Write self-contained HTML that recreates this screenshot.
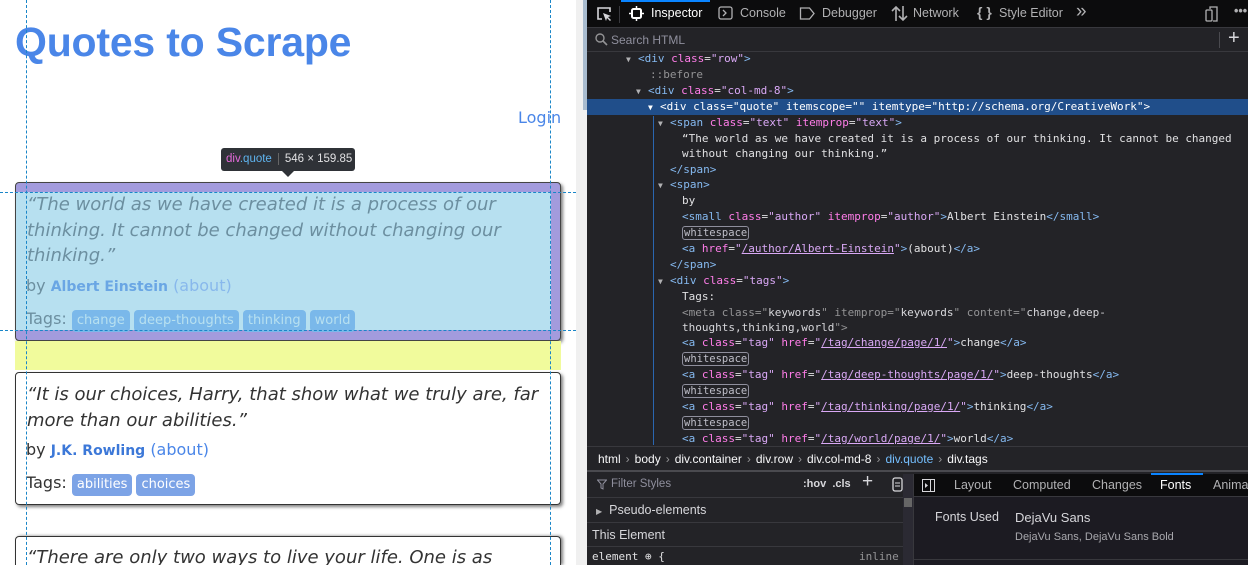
<!DOCTYPE html>
<html style="width:1248px;height:565px;overflow:hidden"><head><meta charset="utf-8"><style>
*{margin:0;padding:0;box-sizing:border-box}
body{width:1248px;height:565px;overflow:hidden;position:relative;background:#fff;font-family:"DejaVu Sans","Liberation Sans",sans-serif}
.a{position:absolute;white-space:nowrap}
.q{font-style:italic;font-size:18px;line-height:25.5px}
.tag{display:inline-block;font-size:13px;padding:2px 5px;border-radius:4px;color:#fff;background:#7ca3e6;margin-right:4px;line-height:18px;font-style:normal}
.dt{font-family:"Liberation Sans","DejaVu Sans",sans-serif;font-size:12.5px;color:#d7d7db}
.m{font-family:"DejaVu Sans Mono","Liberation Mono",monospace;font-size:11px;color:#e0e0e2;line-height:16px}
.t{color:#85b9f0}.n{color:#ff7de9}.v{color:#d9a8f5}.u{text-decoration:underline;color:#d9a8f5}
.ws{border:1px solid #8f8f9d;border-radius:3px;padding:0 1px;color:#bfbfc9;font-size:10.5px}
.tri{color:#b1b1b3;font-size:8px;display:inline-block;width:12px;text-align:left}
.sep{color:#939395;margin:0 5px}
</style></head><body>
<div class="a" style="left:15px;top:19px;font-family:'Liberation Sans',sans-serif;font-weight:bold;font-size:41px;color:#4a86e8;letter-spacing:-0.2px">Quotes to Scrape</div>
<div class="a" style="left:518px;top:108px;font-size:16px;color:#4a86e8">Login</div>

<div class="a" style="left:15px;top:182px;width:546px;height:159px;background:#a39bdd;border:1px solid #444;border-radius:4px;box-shadow:2px 2px 3px rgba(0,0,0,.5)"></div>
<div class="a" style="left:16px;top:192px;width:535px;height:138px;background:#b7e0f0"></div>
<div class="a" style="left:15px;top:341px;width:546px;height:29px;background:#f1fb9c"></div>
<div class="a q" style="left:27px;top:192px;color:#6c8fa0">“The world as we have created it is a process of our<br>thinking. It cannot be changed without changing our<br>thinking.”</div>
<div class="a" style="left:26px;top:276px;font-size:16px;color:#6c8fa0">by <b style="font-size:14px;color:#6aa6e4">Albert Einstein</b> <span style="color:#88b8ec">(about)</span></div>
<div class="a" style="left:26px;top:309px;font-size:16px;color:#6c8fa0">Tags: <span class="tag" style="background:#7ab8ea;color:#b7e0f0">change</span><span class="tag" style="background:#7ab8ea;color:#b7e0f0">deep-thoughts</span><span class="tag" style="background:#7ab8ea;color:#b7e0f0">thinking</span><span class="tag" style="background:#7ab8ea;color:#b7e0f0">world</span></div>

<div class="a" style="left:15px;top:372px;width:546px;height:133px;border:1px solid #333;border-radius:4px;box-shadow:2px 2px 3px rgba(0,0,0,.5)"></div>
<div class="a q" style="left:27px;top:382px;color:#333">“It is our choices, Harry, that show what we truly are, far<br>more than our abilities.”</div>
<div class="a" style="left:26px;top:440px;font-size:16px;color:#333">by <b style="font-size:14px;color:#3c78d8">J.K. Rowling</b> <span style="color:#4a86e8">(about)</span></div>
<div class="a" style="left:26px;top:473px;font-size:16px;color:#333">Tags: <span class="tag">abilities</span><span class="tag">choices</span></div>
<div class="a" style="left:15px;top:536px;width:546px;height:29px;border:1px solid #333;border-bottom:0;border-radius:4px 4px 0 0;box-shadow:2px 0 3px rgba(0,0,0,.5);overflow:hidden">
<div class="q" style="position:absolute;left:11px;top:8px;color:#333;white-space:nowrap">“There are only two ways to live your life. One is as</div></div>

<div class="a" style="left:26px;top:0;height:565px;border-left:1px dashed #1a86c8"></div>
<div class="a" style="left:550px;top:0;height:565px;border-left:1px dashed #1a86c8"></div>
<div class="a" style="left:0;top:192px;width:576px;border-top:1px dashed #1a86c8"></div>
<div class="a" style="left:0;top:330px;width:576px;border-top:1px dashed #1a86c8"></div>

<div class="a" style="left:221px;top:148px;width:134px;height:23px;background:#2f3237;border-radius:3px;font-family:'Liberation Sans',sans-serif;font-size:11.5px;line-height:23px;padding-left:5px;color:#e0e0e2"><span style="color:#e36ad9">div</span><span style="color:#5fb4ef">.quote</span><span style="border-left:1px solid #666;margin:0 6px 0 6px"></span>546 × 159.85</div>
<div class="a" style="left:282px;top:171px;border:6px solid transparent;border-top-color:#2f3237;border-bottom:0"></div>

<div class="a" style="left:576px;top:0;width:11px;height:565px;background:#f0f0f0"></div>
<div class="a" style="left:583px;top:0;width:4px;height:110px;background:#a9bccf"></div>

<div class="a" style="left:587px;top:0;width:661px;height:565px;background:#232327"></div>
<div class="a" style="left:587px;top:0;width:661px;height:28px;background:#0c0c0d;border-bottom:1px solid #38383d"></div>
<div class="a" style="left:621px;top:0;width:89px;height:2px;background:#0a84ff"></div>
<svg class="a" style="left:595px;top:5px" width="18" height="18" viewBox="0 0 18 18"><path d="M7 14H3V3h12v4" fill="none" stroke="#d7d7db" stroke-width="1.6"/><path d="M8 8l8 3-3 1 3 3-1 1-3-3-1 3z" fill="#d7d7db"/></svg>
<div class="a" style="left:619px;top:6px;width:1px;height:17px;background:#38383d"></div>
<svg class="a" style="left:629px;top:6px" width="15" height="15"><rect x="3" y="3" width="9" height="9" rx="1.5" fill="none" stroke="#fff" stroke-width="2"/><path d="M7.5 0v3M7.5 12v3M0 7.5h3M12 7.5h3" stroke="#fff" stroke-width="1.5"/></svg>
<div class="a dt" style="left:651px;top:6px;color:#fff">Inspector</div>
<svg class="a" style="left:718px;top:6px" width="15" height="15"><rect x="1" y="1" width="13" height="12" rx="2" fill="none" stroke="#b1b1b3" stroke-width="1.3"/><path d="M5 4l3 3-3 3" fill="none" stroke="#b1b1b3" stroke-width="1.3"/></svg>
<div class="a dt" style="left:740px;top:6px;color:#b1b1b3">Console</div>
<svg class="a" style="left:799px;top:6px" width="17" height="15"><path d="M1.5 2h9l4.5 5.5-4.5 5.5h-9z" fill="none" stroke="#b1b1b3" stroke-width="1.3"/></svg>
<div class="a dt" style="left:822px;top:6px;color:#b1b1b3">Debugger</div>
<svg class="a" style="left:891px;top:5px" width="17" height="17"><path d="M5 16V2M1 6l4-4 4 4M12 1v14M8 11l4 4 4-4" fill="none" stroke="#b1b1b3" stroke-width="1.6"/></svg>
<div class="a dt" style="left:913px;top:6px;color:#b1b1b3">Network</div>
<div class="a dt" style="left:977px;top:4px;color:#b1b1b3;font-weight:bold;font-size:14px">{ }</div>
<div class="a dt" style="left:999px;top:6px;color:#b1b1b3">Style Editor</div>
<div class="a dt" style="left:1076px;top:1px;color:#b1b1b3;font-size:19px">»</div>
<svg class="a" style="left:1205px;top:5px" width="18" height="18"><rect x="1" y="5" width="6" height="11" rx="1" fill="none" stroke="#b1b1b3" stroke-width="1.3"/><path d="M5 4V2h7v14H8" fill="none" stroke="#b1b1b3" stroke-width="1.3"/></svg>
<div class="a dt" style="left:1234px;top:4px;color:#b1b1b3;font-weight:bold">•••</div>

<div class="a" style="left:587px;top:51px;width:661px;height:1px;background:#38383d"></div>
<svg class="a" style="left:595px;top:33px" width="13" height="13"><circle cx="5" cy="5" r="4" fill="none" stroke="#939395" stroke-width="1.4"/><path d="M8 8l4 4" stroke="#939395" stroke-width="1.6"/></svg>
<div class="a dt" style="left:611px;top:33px;color:#8f8f9d;font-size:12px">Search HTML</div>
<div class="a" style="left:1219px;top:32px;width:1px;height:16px;background:#4a4a4f"></div>
<div class="a dt" style="left:1228px;top:27px;font-size:20px;color:#d7d7db">+</div>

<div class="a" style="left:587px;top:99px;width:661px;height:16px;background:#204e8a"></div>
<div class="a" style="left:653px;top:116px;width:1px;height:329px;background:#2a66b0"></div>
<div class="a m" style="left:626px;top:51px"><span class="tri">▼</span><span class="t">&lt;div</span> <span class="n">class</span>=<span class="v">"row"</span><span class="t">&gt;</span></div>
<div class="a m" style="left:650px;top:67px;color:#939395">::before</div>
<div class="a m" style="left:636px;top:83px"><span class="tri">▼</span><span class="t">&lt;div</span> <span class="n">class</span>=<span class="v">"col-md-8"</span><span class="t">&gt;</span></div>
<div class="a m" style="left:648px;top:99px;color:#fff"><span class="tri" style="color:#fff">▼</span>&lt;div class="quote" itemscope="" itemtype="http://schema.org/CreativeWork"&gt;</div>
<div class="a m" style="left:658px;top:115px"><span class="tri">▼</span><span class="t">&lt;span</span> <span class="n">class</span>=<span class="v">"text"</span> <span class="n">itemprop</span>=<span class="v">"text"</span><span class="t">&gt;</span></div>
<div class="a m" style="left:682px;top:131px">“The world as we have created it is a process of our thinking. It cannot be changed</div>
<div class="a m" style="left:682px;top:146px">without changing our thinking.”</div>
<div class="a m" style="left:670px;top:162px"><span class="t">&lt;/span&gt;</span></div>
<div class="a m" style="left:658px;top:177px"><span class="tri">▼</span><span class="t">&lt;span&gt;</span></div>
<div class="a m" style="left:682px;top:193px">by</div>
<div class="a m" style="left:682px;top:209px"><span class="t">&lt;small</span> <span class="n">class</span>=<span class="v">"author"</span> <span class="n">itemprop</span>=<span class="v">"author"</span><span class="t">&gt;</span>Albert Einstein<span class="t">&lt;/small&gt;</span></div>
<div class="a m" style="left:682px;top:225px"><span class="ws">whitespace</span></div>
<div class="a m" style="left:682px;top:241px"><span class="t">&lt;a</span> <span class="n">href</span>=<span class="v">"</span><span class="u">/author/Albert-Einstein</span><span class="v">"</span><span class="t">&gt;</span>(about)<span class="t">&lt;/a&gt;</span></div>
<div class="a m" style="left:670px;top:257px"><span class="t">&lt;/span&gt;</span></div>
<div class="a m" style="left:658px;top:273px"><span class="tri">▼</span><span class="t">&lt;div</span> <span class="n">class</span>=<span class="v">"tags"</span><span class="t">&gt;</span></div>
<div class="a m" style="left:682px;top:289px">Tags:</div>
<div class="a m" style="left:682px;top:305px;color:#939395">&lt;meta class="<span style="color:#d7d7db">keywords</span>" itemprop="<span style="color:#d7d7db">keywords</span>" content="<span style="color:#d7d7db">change,deep-</span></div>
<div class="a m" style="left:682px;top:320px;color:#939395"><span style="color:#d7d7db">thoughts,thinking,world</span>"&gt;</div>
<div class="a m" style="left:682px;top:335px"><span class="t">&lt;a</span> <span class="n">class</span>=<span class="v">"tag"</span> <span class="n">href</span>=<span class="v">"</span><span class="u">/tag/change/page/1/</span><span class="v">"</span><span class="t">&gt;</span>change<span class="t">&lt;/a&gt;</span></div>
<div class="a m" style="left:682px;top:351px"><span class="ws">whitespace</span></div>
<div class="a m" style="left:682px;top:367px"><span class="t">&lt;a</span> <span class="n">class</span>=<span class="v">"tag"</span> <span class="n">href</span>=<span class="v">"</span><span class="u">/tag/deep-thoughts/page/1/</span><span class="v">"</span><span class="t">&gt;</span>deep-thoughts<span class="t">&lt;/a&gt;</span></div>
<div class="a m" style="left:682px;top:383px"><span class="ws">whitespace</span></div>
<div class="a m" style="left:682px;top:399px"><span class="t">&lt;a</span> <span class="n">class</span>=<span class="v">"tag"</span> <span class="n">href</span>=<span class="v">"</span><span class="u">/tag/thinking/page/1/</span><span class="v">"</span><span class="t">&gt;</span>thinking<span class="t">&lt;/a&gt;</span></div>
<div class="a m" style="left:682px;top:415px"><span class="ws">whitespace</span></div>
<div class="a m" style="left:682px;top:431px"><span class="t">&lt;a</span> <span class="n">class</span>=<span class="v">"tag"</span> <span class="n">href</span>=<span class="v">"</span><span class="u">/tag/world/page/1/</span><span class="v">"</span><span class="t">&gt;</span>world<span class="t">&lt;/a&gt;</span></div>

<div class="a" style="left:587px;top:446px;width:661px;height:26px;background:#232327;border-top:1px solid #38383d;border-bottom:2px solid #4a4a4f"></div>
<div class="a dt" style="left:598px;top:452px;font-size:12px;color:#f9f9fa">html<span class="sep">›</span>body<span class="sep">›</span>div.container<span class="sep">›</span>div.row<span class="sep">›</span>div.col-md-8<span class="sep">›</span><span style="color:#75bfff">div.quote</span><span class="sep">›</span>div.tags</div>

<div class="a" style="left:587px;top:474px;width:325px;height:91px;background:#232327"></div>
<div class="a" style="left:587px;top:497px;width:316px;height:1px;background:#38383d"></div>
<div class="a" style="left:587px;top:522px;width:316px;height:1px;background:#38383d"></div>
<div class="a" style="left:587px;top:546px;width:316px;height:1px;background:#38383d"></div>
<div class="a" style="left:903px;top:474px;width:10px;height:91px;background:#2b2a33"></div>
<div class="a" style="left:904px;top:498px;width:8px;height:9px;background:#666"></div>
<svg class="a" style="left:597px;top:479px" width="10" height="11"><path d="M0.5 1h9L6 5v5L4 9V5z" fill="none" stroke="#8f8f9d"/></svg>
<div class="a dt" style="left:611px;top:478px;font-size:11.5px;color:#8f8f9d">Filter Styles</div>
<div class="a dt" style="left:803px;top:478px;font-size:11px;color:#d7d7db;font-weight:bold">:hov&nbsp; .cls</div>
<div class="a dt" style="left:862px;top:471px;font-size:19px;color:#d7d7db">+</div>
<svg class="a" style="left:892px;top:477px" width="11" height="15"><rect x="1" y="1" width="9" height="13" rx="2" fill="none" stroke="#d7d7db" stroke-width="1.3"/><path d="M3 6h5M3 9h5" stroke="#d7d7db"/></svg>
<div class="a dt" style="left:596px;top:503px;color:#d7d7db"><span style="font-size:8px;color:#b1b1b3">▶</span>&nbsp; Pseudo-elements</div>
<div class="a dt" style="left:592px;top:528px;color:#d7d7db">This Element</div>
<div class="a m" style="left:592px;top:549px">element ⊕ {</div>
<div class="a m" style="left:859px;top:549px;color:#939395">inline</div>

<div class="a" style="left:913px;top:474px;width:335px;height:91px;background:#1c1b22;border-left:1px solid #38383d"></div>
<div class="a" style="left:914px;top:474px;width:334px;height:23px;background:#0c0c0d;border-bottom:1px solid #38383d"></div>
<div class="a" style="left:1151px;top:473px;width:52px;height:2px;background:#0a84ff"></div>
<svg class="a" style="left:922px;top:479px" width="13" height="13"><rect x=".5" y=".5" width="12" height="12" fill="none" stroke="#d7d7db"/><path d="M8.5 1v11" stroke="#d7d7db"/><path d="M3 4l3 2.5-3 2.5z" fill="#d7d7db"/></svg>
<div class="a dt" style="left:954px;top:478px;color:#b1b1b3">Layout</div>
<div class="a dt" style="left:1013px;top:478px;color:#b1b1b3">Computed</div>
<div class="a dt" style="left:1092px;top:478px;color:#b1b1b3">Changes</div>
<div class="a dt" style="left:1160px;top:478px;color:#fff">Fonts</div>
<div class="a dt" style="left:1213px;top:478px;color:#b1b1b3">Anima</div>
<div class="a dt" style="left:935px;top:510px;color:#d7d7db">Fonts Used</div>
<div class="a dt" style="left:1015px;top:510px;color:#d7d7db;font-size:13px">DejaVu Sans</div>
<div class="a dt" style="left:1015px;top:531px;color:#a8a8ad;font-size:11px">DejaVu Sans, DejaVu Sans Bold</div>
<div class="a" style="left:914px;top:559px;width:334px;height:1px;background:#38383d"></div>
</body></html>
